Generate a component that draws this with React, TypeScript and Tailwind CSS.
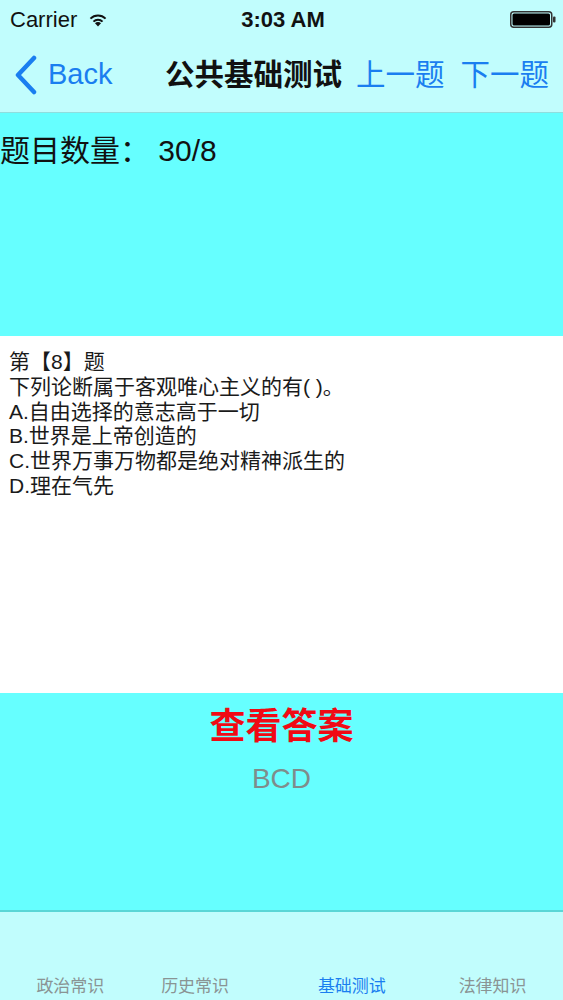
import React from 'react'

const font = '"Liberation Sans", "Noto Sans CJK SC", sans-serif'

const options = [
  '第【8】题',
  '下列论断属于客观唯心主义的有( )。',
  'A.自由选择的意志高于一切',
  'B.世界是上帝创造的',
  'C.世界万事万物都是绝对精神派生的',
  'D.理在气先',
]

const tabs = [
  { label: '政治常识', active: false, cls: '' },
  { label: '历史常识', active: false, cls: 'pr-[32px]' },
  { label: '基础测试', active: true, cls: '' },
  { label: '法律知识', active: false, cls: '' },
]

function Wifi() {
  return (
    <svg width="20" height="15" viewBox="0 0 16 12">
      <path d="M8 11.5 L5.6 8.9 A3.4 3.4 0 0 1 10.4 8.9 Z" fill="#111" />
      <path d="M3.8 7.1 A6 6 0 0 1 12.2 7.1 L11.1 8.2 A4.5 4.5 0 0 0 4.9 8.2 Z" fill="#111" />
      <path d="M1.4 4.7 A9.4 9.4 0 0 1 14.6 4.7 L13.5 5.8 A7.8 7.8 0 0 0 2.5 5.8 Z" fill="#111" />
    </svg>
  )
}

function Battery() {
  return (
    <svg width="46" height="17" viewBox="0 0 46 17">
      <rect x="0.75" y="0.75" width="41" height="15.5" rx="3" fill="none" stroke="#333" strokeWidth="1.5" />
      <rect x="2.5" y="2.5" width="37.5" height="12" rx="1.5" fill="#000" />
      <rect x="43" y="5.5" width="2.5" height="6" rx="1" fill="#333" />
    </svg>
  )
}

export default function App() {
  return (
    <div className="w-[563px] h-[1000px] flex flex-col overflow-hidden" style={{ fontFamily: font }}>
      <div className="bg-[#c1fdfd] h-[113px] flex flex-col border-b border-[#8fdede]">
        <div className="h-[38px] flex items-center justify-between pl-[10px] pr-[7px] text-[22px] text-[#111]">
          <div className="flex items-center gap-[11px] w-[150px]">
            <span>Carrier</span>
            <Wifi />
          </div>
          <span className="font-semibold">3:03 AM</span>
          <div className="w-[150px] flex justify-end">
            <Battery />
          </div>
        </div>
        <div className="flex-1 flex items-center pl-[14px]">
          <svg width="24" height="40" viewBox="0 0 24 40" className="mr-[10px]">
            <path d="M20 3 L4 20 L20 37" fill="none" stroke="#1a7ef0" strokeWidth="4.5" strokeLinecap="round" strokeLinejoin="round" />
          </svg>
          <span className="text-[29px] text-[#1a7ef0] w-[117px]">Back</span>
          <span className="text-[29.5px] font-bold text-[#111] mr-[14px]">公共基础测试</span>
          <span className="text-[29.5px] text-[#1a7ef0] mr-[16px]">上一题</span>
          <span className="text-[29.5px] text-[#1a7ef0]">下一题</span>
        </div>
      </div>

      <div className="bg-[#66ffff] h-[223px] pt-[18px]">
        <div className="text-[30px] text-[#111] leading-[40px]">
          题目数量： 30/8
        </div>
      </div>

      <div className="bg-white h-[357px] pt-[14px] px-[9px]">
        {options.map((line) => (
          <div key={line} className="text-[21px] leading-[24.8px] text-[#1a1a1a]">
            {line}
          </div>
        ))}
      </div>

      <div className="bg-[#66ffff] h-[219px] flex flex-col items-center border-b-2 border-[#5ad6d6]">
        <div className="mt-[10px] text-[36px] font-bold text-[#f00a14] leading-[48px]">查看答案</div>
        <div className="mt-[10px] text-[28px] text-[#7f8c8c] leading-[36px]">BCD</div>
      </div>

      <div className="bg-[#c1fdfd] flex-1 grid grid-cols-4 items-end pb-[1px]">
        {tabs.map((t) => (
          <div
            key={t.label}
            className={`text-center text-[17px] leading-[24px] ${t.active ? 'text-[#1a7ef0]' : 'text-[#8a9494]'} ${t.cls}`}
          >
            {t.label}
          </div>
        ))}
      </div>
    </div>
  )
}
